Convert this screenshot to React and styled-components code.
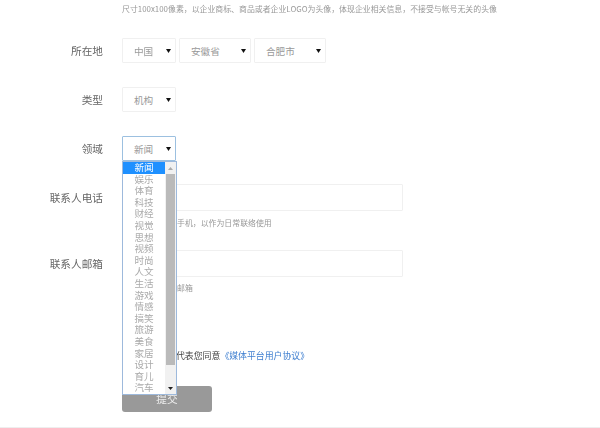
import React from "react";
import styled, { createGlobalStyle } from "styled-components";

const Global = createGlobalStyle`
  html, body { margin: 0; padding: 0; background: #fff; height: 428px; overflow: hidden; }
  body { font-family: "Noto Sans CJK SC", "Liberation Sans", sans-serif; }
`;
const Page = styled.div`
  width: 600px; height: 428px; box-sizing: border-box; overflow: hidden;
  border-bottom: 1px solid #eee; filter: blur(0.4px);
`;
const Form = styled.form`
  display: flex; flex-direction: column; padding-top: 3px;
`;
const Row = styled.div`
  display: grid; grid-template-columns: 103px 1fr; column-gap: 19px;
  align-items: start; margin-top: ${p => p.$top || 0}px;
`;
const Label = styled.label`
  font-size: 10.67px; line-height: ${p => p.$h || 25}px; color: #666; text-align: right; white-space: nowrap;
`;
const Fields = styled.div`display: flex; gap: 3px;`;
const Stack = styled.div`display: flex; flex-direction: column;`;
const Note = styled.p`
  margin: ${p => p.$top || 0}px 0 0; padding-left: ${p => p.$indent || 0}px;
  font-size: 7.9px; line-height: 12px; color: #999; white-space: nowrap;
`;
const SelectBox = styled.div`
  position: relative; box-sizing: border-box; width: ${p => p.$w}px; height: 25px;
  display: flex; align-items: center; justify-content: space-between;
  padding: 0 4px 0 11px; border: 1px solid ${p => p.$open ? "#9cc0e0" : "#f0f0f0"}; border-radius: 1px;
  font-size: 9.6px; color: #999; background: #fff;
`;
const Arrow = styled.svg`width: 5px; height: 4px; fill: #111;`;
const Menu = styled.div`
  position: absolute; left: -1px; top: 24px; width: 55px; height: 234px; box-sizing: border-box;
  display: flex; background: #fff; border: 1px solid #9db9dc; z-index: 5;
`;
const Options = styled.ul`list-style: none; margin: 0; padding: 0; flex: 1;`;
const Option = styled.li`
  height: 11.6px; line-height: 11.6px; font-size: 9.6px; text-align: center;
  color: ${p => p.$on ? "#fff" : "#aaa"}; background: ${p => p.$on ? "#1e90ff" : "transparent"};
`;
const Scrollbar = styled.div`
  width: 11px; display: flex; flex-direction: column; background: #f1f1f1;
`;
const ScrollBtn = styled.div`
  height: 12px; display: flex; align-items: center; justify-content: center;
`;
const ScrollArrow = styled.svg`width: 5px; height: 3px; fill: ${p => p.$c};`;
const Thumb = styled.div`height: 191px; margin: 0 1px; background: #bababa;`;
const ScrollGap = styled.div`flex: 1;`;
const Input = styled.div`
  box-sizing: border-box; width: 281px; height: 27px; border: 1px solid #f0f0f0; border-radius: 1px; background: #fff;
`;
const Agree = styled.div`
  padding-left: 54px; font-size: 8.9px; line-height: 14px; color: #444; white-space: nowrap;
`;
const Link = styled.a`color: #3f7fd0; text-decoration: none;`;
const Submit = styled.button`
  width: 90px; height: 26px; padding: 0; border: 0; border-radius: 3px; background: #999;
  color: #eee; font: 10.67px/26px "Noto Sans CJK SC", sans-serif;
`;

const Caret = () => <Arrow viewBox="0 0 5 4"><path d="M0 0h5L2.5 4z" /></Arrow>;
const Select = ({ w, value, open, children }) => (
  <SelectBox $w={w} $open={open}>{value}<Caret />{children}</SelectBox>
);
const items = "新闻 娱乐 体育 科技 财经 视觉 思想 视频 时尚 人文 生活 游戏 情感 搞笑 旅游 美食 家居 设计 育儿 汽车".split(" ");

export default function App() {
  return (
    <Page>
      <Global />
      <Form>
        <Row>
          <span />
          <Note>尺寸100x100像素，以企业商标、商品或者企业LOGO为头像，体现企业相关信息，不接受与帐号无关的头像</Note>
        </Row>
        <Row $top={23}>
          <Label>所在地</Label>
          <Fields>
            <Select w={54} value="中国" />
            <Select w={72} value="安徽省" />
            <Select w={72} value="合肥市" />
          </Fields>
        </Row>
        <Row $top={24}>
          <Label>类型</Label>
          <Fields><Select w={54} value="机构" /></Fields>
        </Row>
        <Row $top={24}>
          <Label>领域</Label>
          <Fields>
            <Select w={54} value="新闻" open>
              <Menu>
                <Options>
                  {items.map((t, i) => <Option key={t} $on={i === 0}>{t}</Option>)}
                </Options>
                <Scrollbar>
                  <ScrollBtn><ScrollArrow $c="#aaa" viewBox="0 0 5 3"><path d="M2.5 0L5 3H0z" /></ScrollArrow></ScrollBtn>
                  <Thumb />
                  <ScrollGap />
                  <ScrollBtn><ScrollArrow $c="#222" viewBox="0 0 5 3"><path d="M0 0h5L2.5 3z" /></ScrollArrow></ScrollBtn>
                </Scrollbar>
              </Menu>
            </Select>
          </Fields>
        </Row>
        <Row $top={23}>
          <Label $h={27}>联系人电话</Label>
          <Stack>
            <Input />
            <Note $top={6} $indent={55}>手机，以作为日常联络使用</Note>
          </Stack>
        </Row>
        <Row $top={21}>
          <Label $h={27}>联系人邮箱</Label>
          <Stack>
            <Input />
            <Note $top={5} $indent={55}>邮箱</Note>
          </Stack>
        </Row>
        <Row $top={55}>
          <span />
          <Agree>代表您同意<Link href="#">《媒体平台用户协议》</Link></Agree>
        </Row>
        <Row $top={21}>
          <span />
          <div><Submit type="button">提交</Submit></div>
        </Row>
      </Form>
    </Page>
  );
}
